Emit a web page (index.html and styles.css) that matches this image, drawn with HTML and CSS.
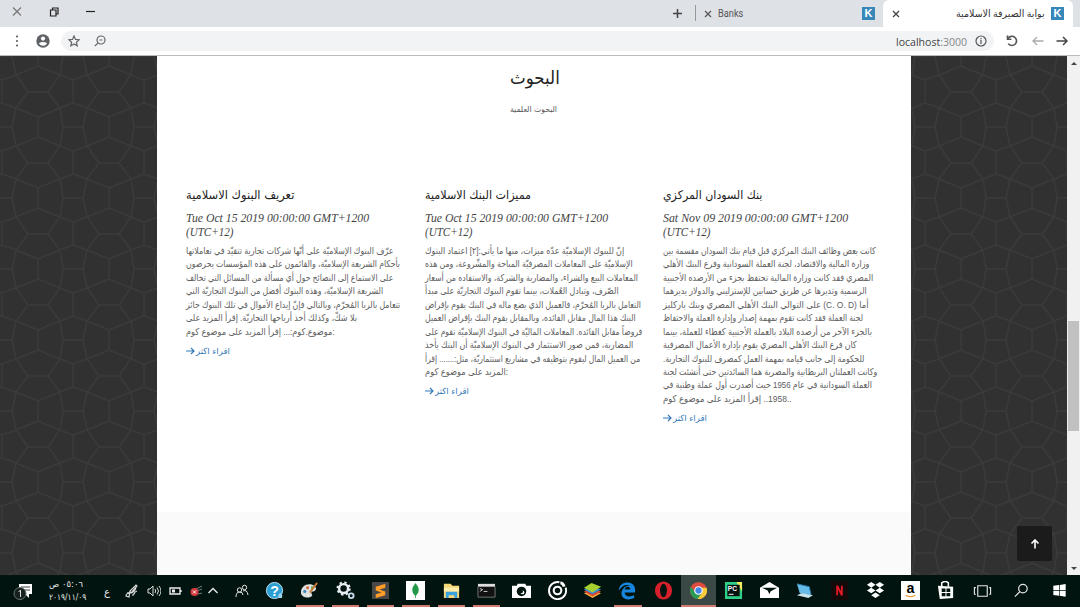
FILE: index.html
```html
<!DOCTYPE html>
<html lang="ar">
<head>
<meta charset="utf-8">
<title>بوابة الصيرفة الاسلامية</title>
<link rel="stylesheet" href="styles.css">
</head>
<body>
<header class="tabs">
  <div class="window-buttons">
    <svg width="12" height="12" viewBox="0 0 12 12"><path d="M2 1.5l8 8M10 1.5l-8 8" stroke="#777" stroke-width="1.2"/></svg>
    <svg width="12" height="12" viewBox="0 0 12 12" fill="none" stroke="#222" stroke-width="1.2"><path d="M2.5 4h5.5v6H2.500z"/><path d="M4.500 4V2h5.500v6H8"/></svg>
    <svg width="12" height="12" viewBox="0 0 12 12"><path d="M1 5.500h9" stroke="#222" stroke-width="1.2"/></svg>
  </div>
  <div class="new-tab"><svg width="11" height="11" viewBox="0 0 11 11"><path d="M5.500 1v9M1 5.500h9" stroke="#444" stroke-width="1.5"/></svg></div>
  <div class="tab tab-idle">
    <svg width="8" height="8" viewBox="0 0 8 8"><path d="M1 1l6 6M7 1L1 7" stroke="#555" stroke-width="1.2"/></svg>
    <span class="fit" data-w="25">Banks</span>
    <b class="k">K</b>
  </div>
  <div class="tab tab-active">
    <svg width="8" height="8" viewBox="0 0 8 8"><path d="M1 1l6 6M7 1L1 7" stroke="#444" stroke-width="1.3"/></svg>
    <span class="tab-title"><span class="fit" dir="rtl" data-w="89">بوابة الصيرفة الاسلامية</span></span>
    <b class="k">K</b>
  </div>
</header>
<div class="toolbar">
  <svg class="dots" width="4" height="12" viewBox="0 0 4 12" fill="#555"><circle cx="2" cy="1.500" r="1"/><circle cx="2" cy="6" r="1"/><circle cx="2" cy="10.500" r="1"/></svg>
  <svg class="user" width="14" height="14" viewBox="0 0 14 14"><circle cx="7" cy="7" r="6.700" fill="#5f6368"/><circle cx="7" cy="4.600" r="2.100" fill="#fff"/><path d="M2.800 9.200Q7 6.600 11.200 9.200Q9.700 11.800 7 11.800T2.800 9.200z" fill="#fff"/></svg>
  <div class="address">
    <svg width="12" height="12" viewBox="0 0 12 12"><path d="M6 1l1.500 3.400 3.700.3-2.800 2.500.8 3.600L6 8.900 2.800 10.800l.8-3.600L.8 4.700l3.700-.3z" fill="none" stroke="#666" stroke-width="1.200"/></svg>
    <svg width="12" height="12" viewBox="0 0 12 12" fill="none" stroke="#666" stroke-width="1.200"><circle cx="7" cy="5" r="4"/><path d="M4 8L.800 11.200M5.500 5h3"/></svg>
    <span class="url"><span class="fit" data-w="71">localhost<i>:3000</i></span></span>
    <svg width="12" height="12" viewBox="0 0 12 12" fill="none" stroke="#555" stroke-width="1.200"><circle cx="6" cy="6" r="5"/><path d="M6 5v4M6 3v1.200"/></svg>
  </div>
  <svg class="reload" width="12" height="12" viewBox="0 0 12 12" fill="none" stroke="#555" stroke-width="1.600"><path d="M2 3.500A4.600 4.600 0 1 1 2.200 8.600"/><path d="M1.500 .5v3.700h3.900"/></svg>
  <svg class="fwd" width="12" height="10" viewBox="0 0 12 10" fill="none" stroke="#aaa" stroke-width="1.300"><path d="M11.500 5H1M5 1L1 5l4 4"/></svg>
  <svg width="12" height="10" viewBox="0 0 12 10" fill="none" stroke="#444" stroke-width="1.500"><path d="M.500 5H11M7 1l4 4-4 4"/></svg>
</div>
<main class="viewport">
  <svg class="pattern" width="1067" height="519">
    <defs><pattern id="mesh" x="2" y="24" width="71" height="71" patternUnits="userSpaceOnUse">
      <path fill="none" stroke="#3a3a3a" stroke-width="1.400" d="M36 37v20M0 0v23M71 0v23M26 12h20M0 47h10M61 47h10M0 23l14 5 22 9 22-9 13-5M0 71l14-5 22-9 22 9 13 5M0 0l14-5M71 0l-13-5M26 12L14 28l-4 19 4 19 8 10M46 12l12 16 3 19-3 19-8 10M26 12L14-5M46 12L58-5"/>
    </pattern></defs>
    <rect width="1067" height="519" fill="#313131"/><rect width="1067" height="519" fill="url(#mesh)"/>
  </svg>
  <div class="page">
    <section class="research">
      <h1><span class="fit" data-w="50">البحوث</span></h1>
      <p class="subtitle"><span class="fit" data-w="47">البحوث العلمية</span></p>
      <div class="articles">
        <article>
          <h2><span class="fit" dir="rtl" data-w="108">تعريف البنوك الاسلامية</span></h2>
          <div class="date"><span class="fit" data-w="183">Tue Oct 15 2019 00:00:00 GMT+1200</span><br><span class="fit" data-w="47">(UTC+12)</span></div>
          <div class="text" dir="rtl">
            <span class="fit" data-w="208">عرّف البنوك الإسلاميّة على أنّها شركات تجارية تتقيّد في تعاملاتها</span>
            <span class="fit" data-w="214">بأحكام الشريعة الإسلاميّة، والقائمون على هذه المؤسسات يحرصون</span>
            <span class="fit" data-w="207">على الاستماع إلى النصائح حول أي مسألة من المسائل التي تخالف</span>
            <span class="fit" data-w="197">الشريعة الإسلاميّة، وهذه البنوك أفضل من البنوك التجاريّة التي</span>
            <span class="fit" data-w="214">تتعامل بالربا المُحرّم، وبالتالي فإنّ إيداع الأموال في تلك البنوك جائز</span>
            <span class="fit" data-w="171">بلا شكّ، وكذلك أخذ أرباحها التجاريّة. إقرأ المزيد على</span>
            <span class="fit" data-w="149">:موضوع.كوم:... إقرأ المزيد على موضوع كوم</span>
          </div>
          <a class="more"><svg width="9" height="8" viewBox="0 0 9 8"><path d="M0 4h8M5 1l3 3-3 3" fill="none" stroke="#337ab7" stroke-width="1.200"/></svg><span class="fit" dir="rtl" data-w="34">اقراء اكثر</span></a>
        </article>
        <article>
          <h2><span class="fit" dir="rtl" data-w="106">مميزات البنك الاسلامية</span></h2>
          <div class="date"><span class="fit" data-w="183">Tue Oct 15 2019 00:00:00 GMT+1200</span><br><span class="fit" data-w="47">(UTC+12)</span></div>
          <div class="text" dir="rtl">
            <span class="fit" data-w="199">إنّ للبنوك الإسلاميّة عدّه ميزات، منها ما يأتي:[٢] اعتماد البنوك</span>
            <span class="fit" data-w="208">الإسلاميّة على المعاملات المصرفيّة المباحة والمشّروعة، ومن هذه</span>
            <span class="fit" data-w="213">المعاملات البيع والشراء، والمضاربة والشركة، والاستفاده من أسعار</span>
            <span class="fit" data-w="194">الصّرف، وتبادل العُملات، بينما تقوم البنوك التجاريّة على مبدأ</span>
            <span class="fit" data-w="216">التعامل بالربا المُحرّم، فالعميل الذي يضع ماله في البنك يقوم بإقراض</span>
            <span class="fit" data-w="211">البنك هذا المال مقابل الفائده، وبالمقابل يقوم البنك بإقراض العميل</span>
            <span class="fit" data-w="217">قروضاً مقابل الفائده. المعاملات الماليّة في البنوك الإسلاميّة تقوم على</span>
            <span class="fit" data-w="208">المضاربة، فمن صور الاستثمار في البنوك الإسلاميّة أن البنك يأخذ</span>
            <span class="fit" data-w="215">من العميل المال ليقوم بتوظيفه في مشاريع استثماريّة، مثل:....... إقرأ</span>
            <span class="fit" data-w="83">:المزيد على موضوع كوم</span>
          </div>
          <a class="more"><svg width="9" height="8" viewBox="0 0 9 8"><path d="M0 4h8M5 1l3 3-3 3" fill="none" stroke="#337ab7" stroke-width="1.200"/></svg><span class="fit" dir="rtl" data-w="34">اقراء اكثر</span></a>
        </article>
        <article>
          <h2><span class="fit" dir="rtl" data-w="99">بنك السودان المركزي</span></h2>
          <div class="date"><span class="fit" data-w="185">Sat Nov 09 2019 00:00:00 GMT+1200</span><br><span class="fit" data-w="47">(UTC+12)</span></div>
          <div class="text" dir="rtl">
            <span class="fit" data-w="213">كانت بعض وظائف البنك المركزي قبل قيام بنك السودان مقسمة بين</span>
            <span class="fit" data-w="206">وزارة المالية والاقتصاد، لجنة العملة السودانية وفرع البنك الأهلي</span>
            <span class="fit" data-w="210">المصري فقد كانت وزارة المالية تحتفظ بجزء من الأرصده الأجنبية</span>
            <span class="fit" data-w="204">الرسمية وتديرها عن طريق حسابين للإسترليني والدولار يديرهما</span>
            <span class="fit" data-w="206">أما (C. O. D) على التوالي البنك الأهلي المصري وبنك باركليز</span>
            <span class="fit" data-w="200">لجنة العملة فقد كانت تقوم بمهمة إصدار وإدارة العملة والاحتفاظ</span>
            <span class="fit" data-w="209">بالجزء الآخر من أرصده البلاد بالعملة الأجنبية كغطاء للعملة، بينما</span>
            <span class="fit" data-w="194">كان فرع البنك الأهلي المصري يقوم بإدارة الأعمال المصرفية</span>
            <span class="fit" data-w="201">للحكومة إلى جانب قيامه بمهمة العمل كمصرف للبنوك التجارية.</span>
            <span class="fit" data-w="214">وكانت العملتان البريطانية والمصرية هما السائدتين حتى أنشئت لجنة</span>
            <span class="fit" data-w="209">العملة السودانية في عام 1956 حيث أصدرت أول عملة وطنية في</span>
            <span class="fit" data-w="129">..1958.. إقرأ المزيد على موضوع كوم</span>
          </div>
          <a class="more"><svg width="9" height="8" viewBox="0 0 9 8"><path d="M0 4h8M5 1l3 3-3 3" fill="none" stroke="#337ab7" stroke-width="1.200"/></svg><span class="fit" dir="rtl" data-w="34">اقراء اكثر</span></a>
        </article>
      </div>
    </section>
    <div class="next"></div>
  </div>
  <div class="scrollbar"><i class="up"></i><i class="thumb"></i><i class="down"></i></div>
  <div class="to-top"><svg width="10" height="10" viewBox="0 0 10 10"><path d="M5 9.500V1M1.500 4.500L5 1l3.500 3.500" fill="none" stroke="#fff" stroke-width="1.600"/></svg></div>
</main>
<footer class="taskbar">
  <div class="tray">
    <svg width="20" height="22" viewBox="0 0 20 22"><path d="M6 4h13v10h-3v4l-4-4H6z" fill="#fff"/><path d="M8 7h9M8 10h9" stroke="#384541"/><circle cx="7" cy="13.500" r="6" fill="#16211f" stroke="#69736f"/><path d="M5.500 12l2-2v7" fill="none" stroke="#ddd"/></svg>
    <div class="clock"><span class="fit" dir="rtl" data-w="34">٠٥:٠٦ ص</span><span class="fit" data-w="37">٢٠١٩/١١/٠٩</span></div>
    <span class="lang">ع</span>
    <svg width="14" height="14" viewBox="0 0 14 14" fill="none" stroke="#ddd" stroke-width="1.200"><path d="M2 9l5-1 5-6-1-1-6 6-1 6-3-1c0-3 3-3 5-3s3-1 5-5M7 11c3 1 1-3 5-4"/></svg>
    <svg width="14" height="12" viewBox="0 0 14 12" fill="none" stroke="#ddd"><path d="M1 4h2l3-3v10L3 8H1zM8 4q1.500 2 0 4M10 2.500q3 3.500 0 7M12 1q4 5 0 10"/></svg>
    <svg width="13" height="10" viewBox="0 0 13 10"><path d="M1 2h10v6H1zM12 4v2" fill="none" stroke="#eee" stroke-width="1.300"/><path d="M3 3.500h3v3H3z" fill="#eee"/></svg>
    <svg width="13" height="12" viewBox="0 0 13 12"><path d="M6 4l6-3M7 6l5-2M8 9l4-1" stroke="#76827e"/><circle cx="4.500" cy="7" r="4" fill="#d43b3e"/><path d="M3 5.500l3 3M6 5.500l-3 3" stroke="#fff"/></svg>
    <svg class="chevron" width="12" height="8" viewBox="0 0 12 8"><path d="M1.500 6L6 1.500 10.500 6" fill="none" stroke="#eee" stroke-width="1.300"/></svg>
    <svg class="people" width="14" height="14" viewBox="0 0 14 14" fill="none" stroke="#e5e5e5"><circle cx="9.500" cy="3.500" r="2.200"/><circle cx="4.500" cy="6" r="2.200"/><path d="M1 13q0-5 3.500-5T8 11M8 7q4-2 5 4"/></svg>
  </div>
  <div class="apps">
    <div><svg viewBox="0 0 20 20"><circle cx="10" cy="10" r="8.500" fill="#2b9fd3" stroke="#c4e9f5"/><text x="10" y="15.500" text-anchor="middle" font-size="15" font-weight="bold" fill="#fff">?</text><path d="M14 15l2-3 2 3v3h-4z" fill="#9bd3ed"/></svg></div>
    <div class="open"><svg viewBox="0 0 20 20"><path d="M1 12C1 6 7 2 13 4c5 2 5 6 1 7-3 0-2 2-1 4-2 4-12 3-12-3z" fill="#dce1df"/><circle cx="5" cy="11" r="1.700" fill="#4287bc"/><circle cx="8" cy="7" r="1.600" fill="#d96838"/><circle cx="13" cy="7" r="1.500" fill="#61a250"/><path d="M18 2L9 14" stroke="#c67a3a" stroke-width="2"/><path d="M10 12l-2 4" stroke="#eee" stroke-width="2"/></svg></div>
    <div class="open"><svg viewBox="0 0 20 20" fill="none"><circle cx="8" cy="8" r="4.700" stroke="#e8eef3" stroke-width="2.600"/><circle cx="8" cy="8" r="6.500" stroke="#e8eef3" stroke-width="2" stroke-dasharray="2.500 2.600"/><circle cx="16" cy="15.500" r="2.500" stroke="#c7dae7" stroke-width="2"/></svg></div>
    <div class="open"><svg viewBox="0 0 20 20"><rect x="1" y="1" width="18" height="18" fill="#484848"/><path d="M5 6l10-3v4L9 9l6 2v4L5 18v-4l6-2-6-2z" fill="#ff9d27"/></svg></div>
    <div class="open"><svg viewBox="0 0 20 20"><path d="M0 0h20v20H0z" fill="#fff"/><path d="M10 2q7 8 0 14-7-6 0-14zm-.400 12h.800v4h-.800z" fill="#239848"/></svg></div>
    <div class="open"><svg viewBox="0 0 20 20"><path d="M2 3h7l2 2h7v13H2z" fill="#f8d779"/><path d="M4 11h12v7h-3v-3H7v3H4z" fill="#3aa2dc"/><path d="M2 7h16v4H2z" fill="#ffedab"/></svg></div>
    <div class="open"><svg viewBox="0 0 20 20"><path d="M1 3h18v14H1z" fill="#111"/><path d="M1 3h18v3H1z" fill="#ddd"/><path d="M1 6v11h18V6" fill="none" stroke="#777"/><path d="M3 8l3 1-3 2M7 11h4" stroke="#ccc" fill="none"/></svg></div>
    <div><svg viewBox="0 0 20 20"><path d="M0 5h5l1-2h8l1 2h5v13H0z" fill="#fff"/><circle cx="10" cy="11" r="5" fill="#02140f"/><circle cx="11" cy="12" r="2" fill="#fff"/><circle cx="9.500" cy="11" r="2" fill="#02140f"/></svg></div>
    <div><svg viewBox="0 0 20 20" fill="none" stroke="#fff"><path d="M12 1.300A9 9 0 1 0 18.500 7" stroke-width="2"/><circle cx="10" cy="10" r="4" stroke-width="2.200"/><path d="M13 2q3 0 4 4" stroke-width="3"/></svg></div>
    <div><svg viewBox="0 0 20 20"><path d="M1 13l8-4 10 4-9 5z" fill="#f0a83b"/><path d="M1 11l8-4 10 4-9 5z" fill="#d94131"/><path d="M1 9l8-4 10 4-9 5z" fill="#378fd1"/><path d="M1 7l8-5 10 4-9 6z" fill="#a6cf30"/></svg></div>
    <div class="open"><svg viewBox="0 0 20 20"><path d="M1 10C1-1 18-1 18 9v3H7c0 5 6 5 10 3v3C8 22 2 17 4 11c2-5 5-6 9-6-5-2-9 0-12 5zm6-1h6c0-4-5-4-6 0z" fill="#1686df"/></svg></div>
    <div><svg viewBox="0 0 20 20"><ellipse cx="10" cy="10" rx="9" ry="9.500" fill="#d8202d"/><ellipse cx="10" cy="10" rx="3.600" ry="7" fill="#02140f"/></svg></div>
    <div class="open current"><svg viewBox="0 0 20 20"><circle cx="10" cy="10" r="9" fill="#dd4b3e"/><path d="M2 6a9 9 0 0 0 7 13l5-7-8-1z" fill="#299b55"/><path d="M18.500 7A9 9 0 0 1 9 19l5-7-1-5z" fill="#f8cc3c"/><circle cx="10" cy="10" r="4.500" fill="#fff"/><circle cx="10" cy="10" r="3.300" fill="#4386e7"/></svg></div>
    <div><svg viewBox="0 0 20 20"><path d="M1 1h12l6 7v11H1z" fill="#30cf89"/><path d="M13 1h6v10z" fill="#f3ee5d"/><path d="M3.500 4h13v12h-13z" fill="#07120e"/><text x="4" y="10.500" font-size="7" font-weight="bold" fill="#fff">PC</text><path d="M5 14h5" stroke="#fff"/></svg></div>
    <div><svg viewBox="0 0 20 20"><path d="M0 7l10-6 10 6v11H0z" fill="#fff"/><path d="M2 7h16l-7 4-1 3-2-4z" fill="#02140f"/></svg></div>
    <div><svg viewBox="0 0 20 20"><path d="M2 3l13 3 2 9-12-2z" fill="#65bce9"/><path d="M2 15l5-2 12 2-5 3z" fill="#cde4ef"/><path d="M2 3l13 3 2 9" fill="none" stroke="#2879aa"/></svg></div>
    <div><svg viewBox="0 0 20 20"><path d="M1 0h18v20H1z" fill="#130a0a"/><path d="M7.500 15V5l5 10V5" fill="none" stroke="#dc1924" stroke-width="2" stroke-linejoin="bevel"/></svg></div>
    <div><svg viewBox="0 0 20 20" fill="#fff"><path d="M5.500 1L10 4 5.500 7 1 4zM14.500 1L19 4l-4.500 3L10 4zM5.500 7l4.500 3-4.500 3L1 10zM14.500 7l4.500 3-4.500 3-4.500-3zM10 12l4.500 3-4.500 3-4.500-3z"/></svg></div>
    <div><svg viewBox="0 0 20 20"><path d="M0 0h20v20H0z" fill="#fff"/><text x="10" y="13" text-anchor="middle" font-size="15" font-weight="bold">a</text><path d="M5 15q5 3 10 0" fill="none" stroke="#ed9d37" stroke-width="1.300"/></svg></div>
    <div><svg viewBox="0 0 20 20"><path d="M2 5l16 1v12L4 19z" fill="#fff"/><path d="M6 6V2q4-3 7 0v4" fill="none" stroke="#fff" stroke-width="1.600"/><path d="M6 8h4v3.500H6zM11 8h4v3.500h-4zM6 12.500h4V16H6zM11 12.500h4V16h-4z" fill="#02140f"/></svg></div>
    <div class="wide"><svg viewBox="0 0 20 20" fill="none" stroke="#e5e5e5" stroke-width="1.200"><path d="M5 5h10v11H5zM3 7H1.500v7H3M17 7h1.500v7H17"/></svg></div>
    <div class="wide"><svg viewBox="0 0 20 20" fill="none" stroke="#e5e5e5" stroke-width="1.300"><circle cx="11.500" cy="8" r="4.500"/><path d="M8.200 11.200L3 16.500"/></svg></div>
    <div class="wide"><svg viewBox="0 0 20 20" fill="#fff"><path d="M3.500 5l6-.8v5.300h-6zM10.200 4.100l6.300-.9v6.300h-6.300zM3.500 10.200h6v5.300l-6-.8zM10.200 10.200h6.300v6.300l-6.300-.9z"/></svg></div>
  </div>
</footer>
<script src="fit.js"></script>
</body>
</html>
```
FILE: styles.css
```css
* { box-sizing: border-box; }
body { margin: 0; width: 1080px; height: 607px; overflow: hidden; display: flex; flex-direction: column; background: #fff; font-family: "DejaVu Sans", sans-serif; color: #555; }
svg { display: block; flex: none; }
.fit { display: inline-block; white-space: nowrap; transform-origin: 0 50%; }
.tabs { height: 27px; flex: none; display: flex; background: #dee1e6; }
.window-buttons { display: flex; gap: 25px; align-items: center; padding: 0 0 4px 11px; width: 671px; }
.new-tab { width: 25px; padding: 3px 1px; border-right: 1px solid #999; height: 16px; margin-top: 5px; }
.tab { display: flex; align-items: center; gap: 6px; font: 10px Roboto, "DejaVu Sans", sans-serif; }
.tab-idle { width: 187px; padding: 0 8px; }
.tab-active { width: 190px; padding: 0 9px; background: #fff; border-radius: 6px 6px 0 0; }
.tab-title { flex: 1; display: flex; justify-content: flex-end; color: #333; font-size: 10px; }
.tab-title .fit { transform-origin: 100% 50%; }
.k { width: 13px; height: 13px; background: #3787b9; color: #fff; font: bold 11px/13px "Liberation Sans", sans-serif; text-align: center; margin-left: auto; }
.toolbar { height: 29px; flex: none; display: flex; align-items: center; background: #fff; border-bottom: 1px solid #bbb; padding: 0 12px 0 15px; }
.user { margin: 0 11px 0 17px; }
.address { flex: 1; height: 20px; border-radius: 10px; background: #f1f3f4; display: flex; align-items: center; gap: 14px; padding: 0 7px; }
.address > svg:last-child { margin-left: -6px; }
.url { flex: 1; display: flex; justify-content: flex-end; font: 11px "Open Sans", sans-serif; color: #444; }
.url .fit { transform-origin: 100% 50%; }
.url i { font-style: normal; color: #888; }
.reload { margin: 0 14px 0 12px; }
.fwd { margin-right: 12px; }
.viewport { position: relative; height: 519px; flex: none; display: flex; padding-left: 157px; }
.pattern { position: absolute; inset: 0; }
.page { position: relative; width: 754px; background: #fff; }
.research { height: 456px; padding: 8px 28px 0 29px; }
h1 { margin: 0; height: 28px; font: 18px/28px "DejaVu Sans", sans-serif; color: #222; text-align: center; }
h1 .fit, .subtitle .fit { transform-origin: 50% 50%; }
.subtitle { margin: 10px 0 0; height: 16px; line-height: 16px; font-size: 8px; text-align: center; padding-right: 2px; }
.articles { margin-top: 67px; display: grid; grid-template-columns: 239px 238px 219px; }
h2 { margin: 0; height: 20px; font: 12px/20px "DejaVu Sans", sans-serif; color: #222; }
.date { margin-top: 6px; height: 28px; font: italic 12px/14px "Liberation Serif", serif; color: #444; white-space: nowrap; }
.text { display: flex; flex-direction: column; align-items: flex-end; margin-top: 5px; font: 9.5px/13.450px "Liberation Sans", "DejaVu Sans", sans-serif; color: #606060; }
.text .fit { height: 13.450px; }
.more { height: 14px; margin-top: 6px; display: flex; align-items: center; gap: 1px; font-size: 8.500px; color: #337ab7; }
.next { height: 63px; background: #fafafa; }
.scrollbar { position: relative; margin-left: auto; width: 13px; background: #f1f1f1; display: flex; flex-direction: column; align-items: center; }
.up, .down { width: 0; height: 0; border: 3px solid transparent; }
.up { border-bottom-color: #444; border-top: 0; margin: 6px 0 256px; }
.thumb { width: 11px; height: 110px; background: #c1c1c1; }
.down { border-top-color: #444; border-bottom: 0; margin: auto 0 5px; }
.to-top { position: absolute; left: 1017px; top: 470px; width: 35px; height: 35px; background: #1b1b1b; border-radius: 2px; display: grid; place-items: center; }
.taskbar { height: 32px; flex: none; background: #02140f; display: flex; }
.tray { width: 257px; flex: none; display: flex; align-items: center; padding: 0 10px 0 10px; gap: 8px; color: #e8e8e8; border-left: 3px solid #02140f; }
.clock { width: 38px; margin: 0 9px 0 8px; display: flex; flex-direction: column; align-items: flex-start; font-size: 8.500px; line-height: 13px; }
.lang { font-size: 10px; margin-right: 7px; }
.tray .chevron { margin-left: -4px; }
.tray .people { margin-left: 8px; }
.apps { display: flex; }
.apps div { flex: none; width: 35.330px; height: 32px; display: flex; justify-content: center; padding-top: 6px; position: relative; }
.apps svg { width: 19px; height: 19px; font-family: "Liberation Sans", sans-serif; }
.apps .open::after { content: ""; position: absolute; left: 4px; right: 4px; bottom: 0; height: 2px; background: #d27970; }
.apps .current { background: #3b4946; }
.apps .current::after { left: 0; right: 0; }
.apps .wide { width: 38.500px; }
```
FILE: fit.js
```js
// Scale each line of text horizontally to its measure.
document.querySelectorAll('.fit').forEach(function (el) {
  var scale = Number(el.dataset.w) / el.offsetWidth;
  // Right-to-left article lines share the left edge of their column.
  el.style.transform = 'scaleX(' + scale + ')';
});
```
